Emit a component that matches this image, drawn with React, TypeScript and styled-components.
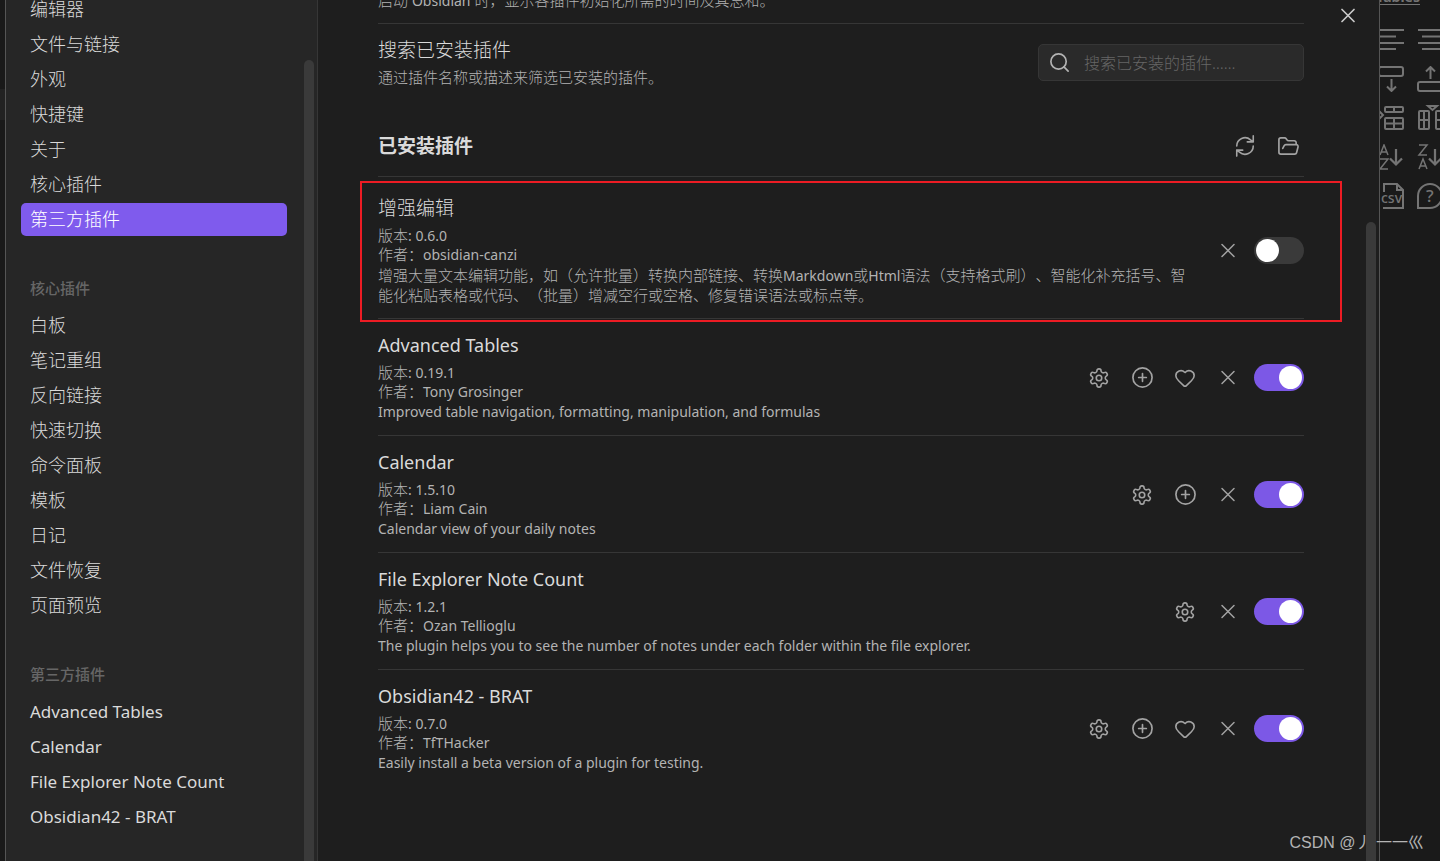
import React from 'react';
import styled, { createGlobalStyle } from 'styled-components';
import { CirclePlus, FolderOpen, Heart, Search, X } from 'lucide-react';

const GlobalStyle = createGlobalStyle`
  *, *::before, *::after { box-sizing: border-box; }
  body {
    margin: 0;
    background: #1a1a1a;
    color: #dadada;
    font-family: "Noto Sans", "Noto Sans CJK SC", sans-serif;
    font-size: 15px;
    text-spacing-trim: space-all;
  }
  button, input { font: inherit; color: inherit; }
`;

const Shell = styled.div`
  position: relative;
  display: flex;
  min-height: 100vh;
  overflow: hidden;
`;

const LeftEdge = styled.div`
  flex: 0 0 5px;
  padding-top: 89px;
  background: #191919;
`;

const LeftTab = styled.div`
  height: 31px;
  background: #222222;
`;

const Modal = styled.div`
  position: relative;
  flex: 1;
  min-width: 0;
  display: flex;
  overflow: hidden;
  padding-right: 3px;
  background: #1e1e1e;
  border: 1px solid #555555;
  border-top: 0;
  border-radius: 0 0 10px 10px;
`;

const Sidebar = styled.aside`
  flex: 0 0 312px;
  display: flex;
  justify-content: space-between;
  padding: 0 3px 0 15px;
  background: #262626;
  border-right: 1px solid #363636;
`;

const Nav = styled.nav`
  width: 266px;
  margin-top: -7px;
`;

const Thumb = styled.div<{ $start: number }>`
  flex: 0 0 10px;
  margin-top: ${(p) => p.$start}px;
  border-radius: 5px 5px 0 0;
  background: #3a3a3a;
`;

const NavGroup = styled.div`
  display: flex;
  flex-direction: column;
  gap: 2px;
  margin-bottom: 36px;
`;

const NavHeading = styled.h2`
  margin: 0 0 4px;
  padding-left: 9px;
  font-size: 15px;
  font-weight: 500;
  line-height: 33px;
  color: #666666;
`;

const NavItem = styled.a<{ $active?: boolean; $latin?: boolean }>`
  height: 33px;
  padding-left: 9px;
  border-radius: 5px;
  font-size: ${(p) => (p.$latin ? 17 : 18)}px;
  font-weight: ${(p) => (p.$latin ? 400 : 300)};
  line-height: 33px;
  text-decoration: none;
  color: ${(p) => (p.$active ? '#ffffff' : '#dadada')};
  background: ${(p) => (p.$active ? '#7f5bed' : 'transparent')};
`;

const Content = styled.main`
  flex: 1;
  min-width: 0;
  margin-top: -9px;
  padding: 0 62px 72px 60px;
`;

const Row = styled.section<{ $spacious?: boolean }>`
  position: relative;
  display: flex;
  align-items: center;
  justify-content: space-between;
  padding: ${(p) => (p.$spacious ? 19 : 14)}px 0 13px;
  border-top: 1px solid #363636;
`;

const Info = styled.div`
  flex: 0 1 812px;
  min-width: 0;
`;

const Title = styled.h3<{ $latin?: boolean }>`
  margin: 0 0 5px;
  font-size: ${(p) => (p.$latin ? 18 : 19)}px;
  font-weight: ${(p) => (p.$latin ? 400 : 300)};
  line-height: 25px;
`;

const Meta = styled.p`
  margin: 0;
  font-weight: 300;
  line-height: 19px;
  color: #b3b3b3;
`;

const Latin = styled.span`
  font-size: 14px;
  font-weight: 400;
  line-height: 1;
`;

const Description = styled.p<{ $latin?: boolean }>`
  margin: 1px 0 0;
  font-size: ${(p) => (p.$latin ? 14 : 15)}px;
  font-weight: ${(p) => (p.$latin ? 400 : 300)};
  line-height: 20px;
  color: #b3b3b3;
`;

const TopNote = styled(Description)`
  margin-top: 0;
  padding-bottom: 14px;
  line-height: 18px;
`;

const SearchBox = styled.label`
  flex: 0 0 266px;
  min-width: 0;
  display: flex;
  align-items: center;
  height: 37px;
  padding: 0 9px;
  gap: 13px;
  border: 1px solid #363636;
  border-radius: 5px;
  background: #2a2a2a;
  color: #b3b3b3;
`;

const SearchInput = styled.input`
  flex: 1;
  width: 100%;
  min-width: 0;
  padding: 0;
  border: 0;
  outline: 0;
  background: transparent;
  font-size: 16px;
  font-weight: 300;
  &::placeholder { color: #666666; opacity: 1; }
`;

const HeadingRow = styled.div`
  display: flex;
  align-items: center;
  justify-content: space-between;
  padding: 32px 4px 16px 0;
`;

const Heading = styled.h2`
  margin: 0;
  font-size: 19px;
  font-weight: 700;
  line-height: 28px;
`;

const Controls = styled.div`
  display: flex;
  align-items: center;
  gap: 14px;
`;

const IconGroup = styled.div`
  display: flex;
  gap: 19px;
`;

const IconButton = styled.button`
  display: flex;
  align-items: center;
  justify-content: center;
  width: 24px;
  height: 24px;
  padding: 0;
  border: 0;
  background: transparent;
  color: #a3a3a3;
`;

const CloseButton = styled(IconButton)`
  position: absolute;
  top: 3px;
  right: 19px;
  color: #c8c8c8;
`;

const Toggle = styled.input`
  appearance: none;
  display: flex;
  align-items: center;
  width: 50px;
  height: 27px;
  margin: 0;
  padding: 0 2px;
  border-radius: 14px;
  background: #3a3a3a;
  &::before {
    content: "";
    width: 23px;
    height: 23px;
    border-radius: 50%;
    background: #ffffff;
  }
  &:checked { justify-content: flex-end; background: #7c58e6; }
`;

const Highlight = styled.div`
  position: absolute;
  top: 4px;
  right: -38px;
  bottom: -4px;
  left: -18px;
  border: 2px solid #ed1c24;
  pointer-events: none;
`;

const RightEdge = styled.aside`
  flex: 0 0 60px;
  overflow: hidden;
  background: #1a1a1a;
  color: #747474;
`;

const EdgeTitle = styled.div`
  display: flex;
  justify-content: flex-end;
  width: 40px;
  height: 27px;
  margin-top: -10px;
  font-size: 14px;
  font-weight: 700;
  line-height: 14px;
  text-decoration: underline;
  text-underline-offset: 2px;
`;

const ToolGrid = styled.div`
  display: grid;
  grid-template-columns: 26px 26px;
  gap: 13px;
  margin: 10px 0 0 -2px;
`;

const ToolButton = styled(IconButton)`
  width: 26px;
  height: 26px;
  color: inherit;
`;

const ToolText = styled.text`
  fill: currentColor;
  stroke: none;
  font-weight: 500;
`;

const Watermark = styled.div`
  position: absolute;
  right: 16px;
  bottom: 15px;
  font-family: "Liberation Sans", "Noto Sans CJK SC", sans-serif;
  font-size: 16px;
  line-height: 24px;
  color: #b4b4b4;
  white-space: nowrap;
`;

const RefreshIcon = () => (
  <svg width="22" height="22" viewBox="0 0 24 24" fill="none" stroke="currentColor" strokeWidth="1.75" strokeLinecap="round" strokeLinejoin="round">
    <path d="M21 1v6.500h-6.500M3 12a9 9 0 0 1 15-6.700L21 7.500M3 23v-6.500h6.500M21 12a9 9 0 0 1-15 6.700L3 16.500" />
  </svg>
);

const GearIcon = () => (
  <svg width="22" height="22" viewBox="0 0 24 24" fill="none" stroke="currentColor" strokeWidth="1.75" strokeLinecap="round" strokeLinejoin="round">
    <path d="M12.22 2h-.44a2 2 0 0 0-2 2v.18a2 2 0 0 1-1 1.73l-.43.25a2 2 0 0 1-2 0l-.15-.08a2 2 0 0 0-2.73.73l-.22.38a2 2 0 0 0 .73 2.73l.15.1a2 2 0 0 1 1 1.72v.51a2 2 0 0 1-1 1.74l-.15.09a2 2 0 0 0-.73 2.73l.22.38a2 2 0 0 0 2.73.73l.15-.08a2 2 0 0 1 2 0l.43.25a2 2 0 0 1 1 1.73V20a2 2 0 0 0 2 2h.44a2 2 0 0 0 2-2v-.18a2 2 0 0 1 1-1.73l.43-.25a2 2 0 0 1 2 0l.15.08a2 2 0 0 0 2.73-.73l.22-.39a2 2 0 0 0-.73-2.73l-.15-.08a2 2 0 0 1-1-1.74v-.5a2 2 0 0 1 1-1.74l.15-.09a2 2 0 0 0 .73-2.73l-.22-.38a2 2 0 0 0-2.73-.73l-.15.08a2 2 0 0 1-2 0l-.43-.25a2 2 0 0 1-1-1.73V4a2 2 0 0 0-2-2z" />
    <circle cx="12" cy="12" r="3" />
  </svg>
);

const tools: { label: string; art: React.ReactNode }[] = [
  { label: '左对齐', art: <path d="M0 3h26M0 9.500h18M0 16h26M0 22h18" /> },
  { label: '居中对齐', art: <path d="M1 3h26M5 9.500h18M1 16h26M5 22h18" /> },
  { label: '下方插入行', art: <><rect x="1" y="1" width="24" height="9" rx="2" /><path d="M13.500 13v12M9 20.500l4.500 4.500 4.500-4.500" /></> },
  { label: '上方插入行', art: <><rect x="1" y="16" width="24" height="9" rx="2" /><path d="M13.500 13V1M9 5.500L13.500 1 18 5.500" /></> },
  { label: '移动行', art: <><rect x="7" y="2" width="18" height="5" rx="1" /><rect x="7" y="13" width="18" height="11" rx="1" /><path d="M16 2v5M16 13v11M7 18.500h18M1 6l4 4-4 4" /></> },
  { label: '移动列', art: <><rect x="2" y="6" width="10" height="18" rx="1" /><rect x="19" y="6" width="10" height="18" rx="1" /><path d="M7 6v18M2 15h10M19 15h7M11 1h9l-4.500 4z" /></> },
  { label: '升序排列', art: <><path d="M2 11L6 1l4 10M3.500 8h5M2 15h8L2 25h8" strokeWidth="1.500" /><path d="M18 5v15M12 14.500l6 6 6-6" strokeWidth="2.250" /></> },
  { label: '降序排列', art: <><path d="M2 1h8L2 11h8M2 25l4-10 4 10M3.500 22h5" strokeWidth="1.500" /><path d="M18 5v15M12 14.500l6 6 6-6" strokeWidth="2.250" /></> },
  { label: '导出 CSV', art: <><path d="M6 9V1h13l6 6v18H5M19 1v6h6" /><ToolText x="3" y="20" fontSize="14">csv</ToolText></> },
  { label: '帮助', art: <><path d="M1 25V13a12 12 0 1 1 12 12z" /><ToolText x="9" y="19" fontSize="17">?</ToolText></> },
];

const coreTabs = ['编辑器', '文件与链接', '外观', '快捷键', '关于', '核心插件', '第三方插件'];
const corePlugins = ['白板', '笔记重组', '反向链接', '快速切换', '命令面板', '模板', '日记', '文件恢复', '页面预览'];
const communityPlugins = ['Advanced Tables', 'Calendar', 'File Explorer Note Count', 'Obsidian42 - BRAT'];

type Action = 'settings' | 'hotkeys' | 'fund';
type Plugin = {
  name: string;
  version: string;
  author: string;
  description: React.ReactNode;
  actions: Action[];
  enabled: boolean;
  local?: boolean;
};

const plugins: Plugin[] = [
  {
    name: '增强编辑',
    version: '0.6.0',
    author: 'obsidian-canzi',
    description: <>增强大量文本编辑功能，如（允许批量）转换内部链接、转换<Latin>Markdown</Latin>或<Latin>Html</Latin>语法（支持格式刷）、智能化补充括号、智能化粘贴表格或代码、（批量）增减空行或空格、修复错误语法或标点等。</>,
    actions: [],
    enabled: false,
    local: true,
  },
  { name: 'Advanced Tables', version: '0.19.1', author: 'Tony Grosinger', description: 'Improved table navigation, formatting, manipulation, and formulas', actions: ['settings', 'hotkeys', 'fund'], enabled: true },
  { name: 'Calendar', version: '1.5.10', author: 'Liam Cain', description: 'Calendar view of your daily notes', actions: ['settings', 'hotkeys'], enabled: true },
  { name: 'File Explorer Note Count', version: '1.2.1', author: 'Ozan Tellioglu', description: 'The plugin helps you to see the number of notes under each folder within the file explorer.', actions: ['settings'], enabled: true },
  { name: 'Obsidian42 - BRAT', version: '0.7.0', author: 'TfTHacker', description: 'Easily install a beta version of a plugin for testing.', actions: ['settings', 'hotkeys', 'fund'], enabled: true },
];

const actionArt: Record<Action, { label: string; art: React.ReactNode }> = {
  settings: { label: '选项', art: <GearIcon /> },
  hotkeys: { label: '快捷键', art: <CirclePlus size={23} strokeWidth={1.75} /> },
  fund: { label: '赞助', art: <Heart size={22} strokeWidth={1.75} /> },
};

const PluginRow = ({ plugin }: { plugin: Plugin }) => (
  <Row $spacious={plugin.local}>
    <Info>
      <Title $latin={!plugin.local}>{plugin.name}</Title>
      <Meta>版本<Latin>: {plugin.version}</Latin></Meta>
      <Meta>作者：<Latin>{plugin.author}</Latin></Meta>
      <Description $latin={!plugin.local}>{plugin.description}</Description>
    </Info>
    <Controls>
      <IconGroup>
        {plugin.actions.map((a) => (
          <IconButton key={a} aria-label={actionArt[a].label}>{actionArt[a].art}</IconButton>
        ))}
        <IconButton aria-label="卸载"><X size={25} strokeWidth={1.5} /></IconButton>
      </IconGroup>
      <Toggle type="checkbox" aria-label={plugin.name} defaultChecked={plugin.enabled} />
    </Controls>
    {plugin.local && <Highlight />}
  </Row>
);

export default function App() {
  return (
    <Shell>
      <GlobalStyle />
      <LeftEdge><LeftTab /></LeftEdge>
      <Modal>
        <Sidebar>
          <Nav>
            <NavGroup>
              {coreTabs.map((t) => <NavItem key={t} href="#" $active={t === '第三方插件'}>{t}</NavItem>)}
            </NavGroup>
            <NavHeading>核心插件</NavHeading>
            <NavGroup>
              {corePlugins.map((t) => <NavItem key={t} href="#">{t}</NavItem>)}
            </NavGroup>
            <NavHeading>第三方插件</NavHeading>
            <NavGroup>
              {communityPlugins.map((t) => <NavItem key={t} href="#" $latin>{t}</NavItem>)}
            </NavGroup>
          </Nav>
          <Thumb $start={60} />
        </Sidebar>
        <Content>
          <TopNote>启动 <Latin>Obsidian</Latin> 时，显示各插件初始化所需的时间及其总和。</TopNote>
          <Row>
            <Info>
              <Title as="h2">搜索已安装插件</Title>
              <Meta>通过插件名称或描述来筛选已安装的插件。</Meta>
            </Info>
            <SearchBox>
              <Search size={23} strokeWidth={1.75} />
              <SearchInput type="search" aria-label="搜索已安装插件" placeholder="搜索已安装的插件……" />
            </SearchBox>
          </Row>
          <HeadingRow>
            <Heading>已安装插件</Heading>
            <IconGroup>
              <IconButton aria-label="检查更新"><RefreshIcon /></IconButton>
              <IconButton aria-label="打开插件文件夹"><FolderOpen size={23} strokeWidth={1.75} /></IconButton>
            </IconGroup>
          </HeadingRow>
          {plugins.map((p) => <PluginRow key={p.name} plugin={p} />)}
        </Content>
        <Thumb $start={222} />
        <CloseButton aria-label="关闭"><X size={25} strokeWidth={1.75} /></CloseButton>
      </Modal>
      <RightEdge>
        <EdgeTitle>Tables</EdgeTitle>
        <ToolGrid>
          {tools.map((t) => (
            <ToolButton key={t.label} aria-label={t.label}>
              <svg width="26" height="26" viewBox="0 0 26 26" fill="none" stroke="currentColor" strokeWidth="2">{t.art}</svg>
            </ToolButton>
          ))}
        </ToolGrid>
      </RightEdge>
      <Watermark>CSDN @丿 一一巛</Watermark>
    </Shell>
  );
}
